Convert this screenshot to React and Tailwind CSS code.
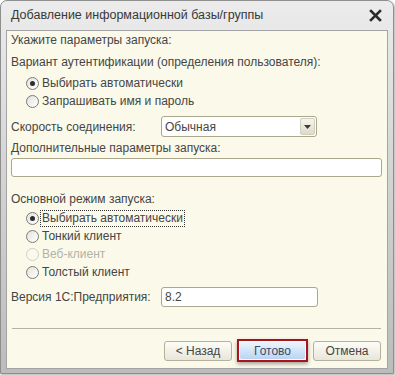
import React from 'react'

const font = { fontFamily: '"Liberation Sans", Arial, sans-serif' }

function Radio({ checked, disabled, focus, label }) {
  return (
    <div className="flex items-center h-[18px] pl-[15px]">
      <span
        className={
          'w-[13px] h-[13px] rounded-full border flex items-center justify-center ' +
          (disabled
            ? 'border-[#d2d0c4] bg-[#fbf9ee]'
            : 'border-[#7c7c74] bg-gradient-to-br from-[#e2e2dc] to-white')
        }
      >
        {checked && <span className="w-[5px] h-[5px] rounded-full bg-[#2d2d2d]" />}
      </span>
      <span
        className={
          'ml-[2px] px-[1px] leading-[15px] ' +
          (focus ? 'outline outline-1 outline-dotted outline-[#333] ' : '') +
          (disabled ? 'text-[#b4b2a6]' : 'text-[#454545]')
        }
      >
        {label}
      </span>
    </div>
  )
}

function Btn({ children, primary }) {
  if (primary)
    return (
      <div className="w-[71px] h-[23px] border-2 border-[#a8141c] p-[1px] shadow-[0_2px_4px_rgba(0,0,0,.35)]">
        <div className="w-full h-full rounded-[2px] bg-gradient-to-b from-[#eef5fd] to-[#b9d4f3] flex items-center justify-center text-[#3a4a66]">
          {children}
        </div>
      </div>
    )
  return (
    <div className="w-[68px] h-[20px] rounded-[3px] border border-[#b3b09c] bg-gradient-to-b from-[#fdfdf8] to-[#e8e6da] flex items-center justify-center text-[#454545]">
      {children}
    </div>
  )
}

export default function App() {
  return (
    <div className="w-[395px] h-[375px] bg-white text-[12px]" style={font}>
      <div className="w-[394px] h-[374px] rounded-t-[7px] border border-[#8e8e8e] bg-gradient-to-b from-[#ececec] via-[#d2d2d2] to-[#bcbcbc] flex flex-col px-[5px] pb-[4px] shadow-[1px_1px_2px_rgba(0,0,0,.3)]">
        <div className="h-[29px] flex items-center justify-between pl-[5px] pr-[6px] shrink-0">
          <span className="text-[12.5px] text-[#383838]">Добавление информационной базы/группы</span>
          <svg width="13" height="13" viewBox="0 0 13 13">
            <path d="M2 2L11 11M11 2L2 11" stroke="#2a2a2a" strokeWidth="2.6" strokeLinecap="square" />
          </svg>
        </div>
        <div className="flex-1 border border-[#a4a4a4] bg-[#fbf9ea] flex flex-col px-[4px] text-[#454545]">
          <div className="h-[18px] flex items-center">Укажите параметры запуска:</div>
          <div className="h-[18px] flex items-center mt-[4px]">Вариант аутентификации (определения пользователя):</div>
          <div className="mt-[3px]">
            <Radio checked label="Выбирать автоматически" />
            <Radio label="Запрашивать имя и пароль" />
          </div>
          <div className="flex items-center mt-[6px] h-[21px]">
            <span className="w-[150px]">Скорость соединения:</span>
            <div className="w-[156px] h-[21px] rounded-[3px] border border-[#aaa78c] bg-white flex items-center justify-between pl-[3px] pr-[1px]">
              <span>Обычная</span>
              <div className="w-[15px] h-[17px] rounded-[2px] bg-gradient-to-b from-[#f6f5ee] to-[#dedbcb] border border-[#cfcdbc] flex items-center justify-center">
                <svg width="7" height="4" viewBox="0 0 7 4"><path d="M0 0H7L3.5 4Z" fill="#3c3c3c" /></svg>
              </div>
            </div>
          </div>
          <div className="h-[18px] flex items-center mt-[2px]">Дополнительные параметры запуска:</div>
          <div className="h-[19px] rounded-[3px] border border-[#aaa78c] bg-white mt-[1px] mr-[1px]" />
          <div className="h-[18px] flex items-center mt-[13px]">Основной режим запуска:</div>
          <div className="mt-[1px]">
            <Radio checked focus label="Выбирать автоматически" />
            <Radio label="Тонкий клиент" />
            <Radio disabled label="Веб-клиент" />
            <Radio label="Толстый клиент" />
          </div>
          <div className="flex items-center mt-[6px] h-[20px]">
            <span className="w-[150px]">Версия 1С:Предприятия:</span>
            <div className="w-[157px] h-[20px] rounded-[3px] border border-[#aaa78c] bg-white flex items-center pl-[3px]">8.2</div>
          </div>
          <div className="h-px bg-[#b6b3a2] mt-[21px] ml-[1px] mr-[2px]" />
          <div className="flex justify-end items-center gap-[5px] mt-[10px] pr-[2px]">
            <Btn>&lt; Назад</Btn>
            <Btn primary>Готово</Btn>
            <Btn>Отмена</Btn>
          </div>
        </div>
      </div>
    </div>
  )
}
